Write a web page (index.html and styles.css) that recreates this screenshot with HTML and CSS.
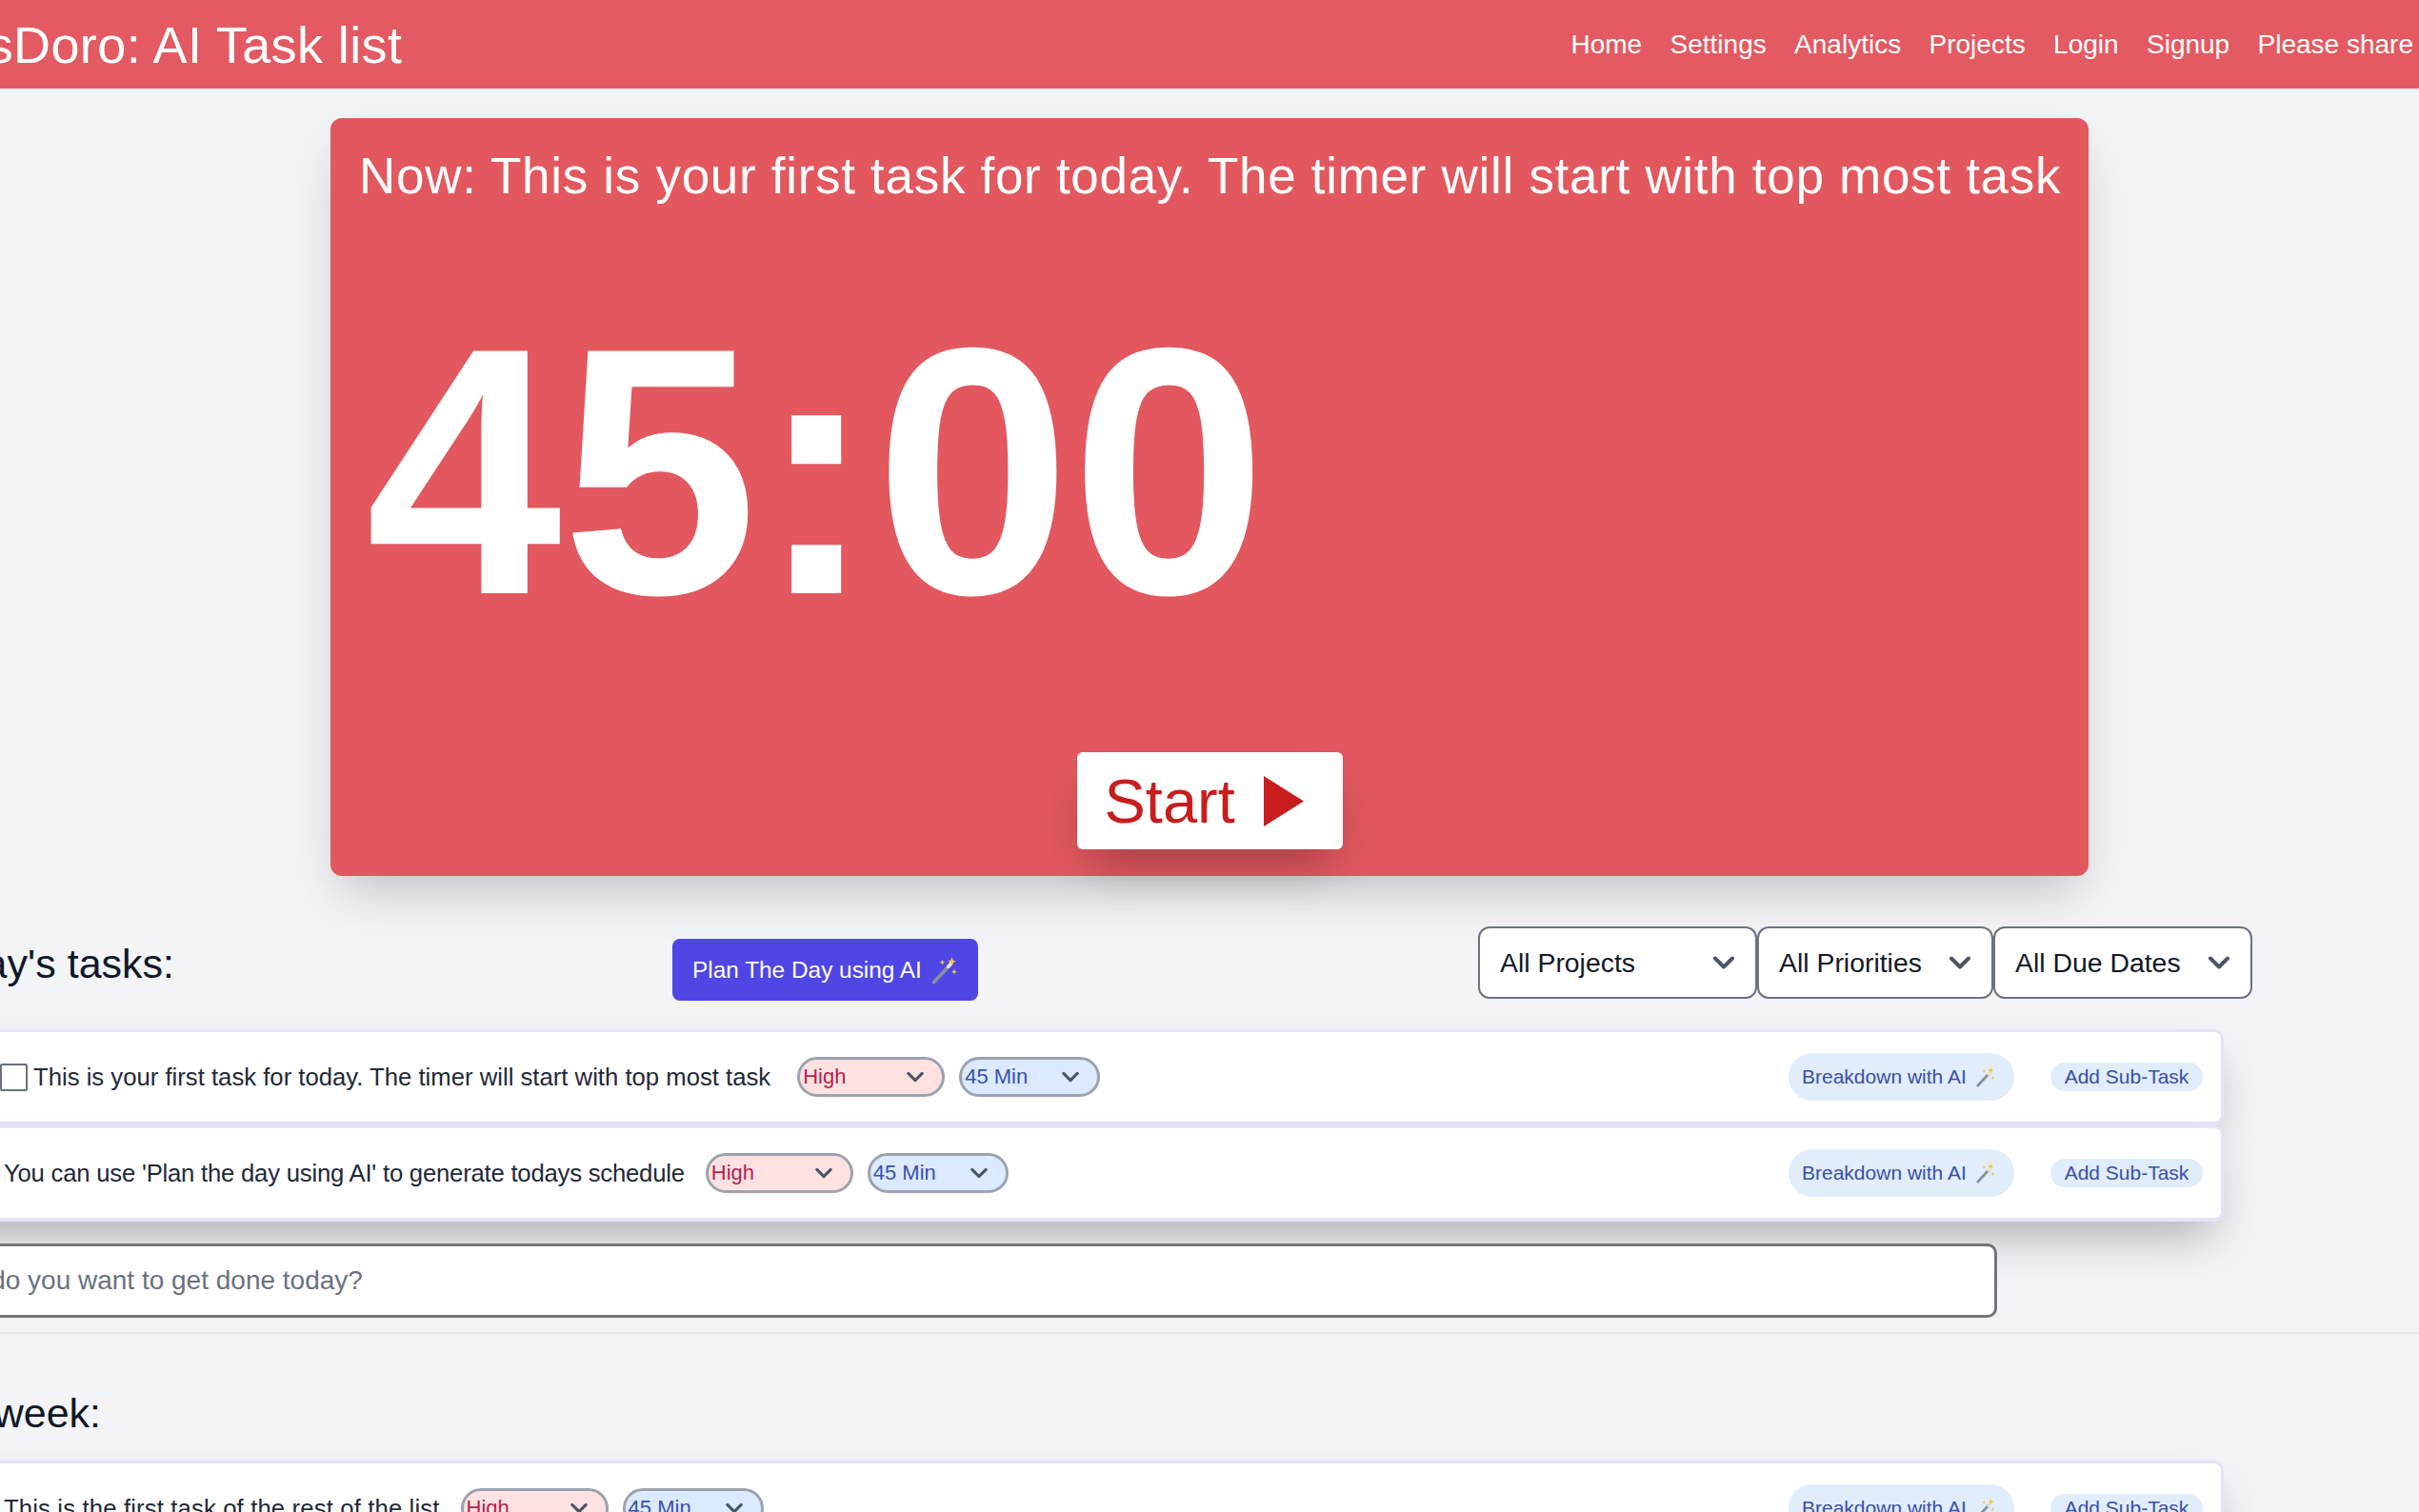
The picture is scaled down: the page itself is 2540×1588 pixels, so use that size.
FILE: index.html
```html
<!DOCTYPE html>
<html lang="en">
<head>
    <meta charset="UTF-8">
    <title>TasksDoro: AI Task list</title>
    <link rel="stylesheet" href="styles.css">
</head>
<body>
    <svg class="defs" width="0" height="0">
        <symbol id="chev" viewBox="0 0 20 20">
            <path d="M4 7l6 6 6-6" fill="none" stroke="currentColor" stroke-width="2.6" stroke-linecap="round" stroke-linejoin="round"/>
        </symbol>
        <symbol id="wand" viewBox="0 0 24 24">
            <path d="M3 22L15 9" stroke="#8a8f9c" stroke-width="3" stroke-linecap="round"/>
            <path d="M15 9l2.500-2.800" stroke="#e8e4d0" stroke-width="3" stroke-linecap="round"/>
            <path d="M18 1l1 2.500 2.500 1-2.500 1-1 2.500-1-2.500-2.500-1 2.500-1z" fill="#f2c83a"/>
            <path d="M10 3l.7 1.600 1.600.7-1.600.7-.7 1.600-.7-1.600-1.600-.7 1.600-.7z" fill="#f2c83a"/>
            <path d="M20 11l.7 1.600 1.600.7-1.600.7-.7 1.600-.7-1.600-1.600-.7 1.600-.7z" fill="#f2c83a"/>
        </symbol>
    </svg>

    <div class="navbar">
        <div class="brand">TasksDoro: AI Task list</div>
        <div class="navlinks">
            <a>Home</a>
            <a>Settings</a>
            <a>Analytics</a>
            <a>Projects</a>
            <a>Login</a>
            <a>Signup</a>
            <a>Please share</a>
        </div>
    </div>

    <div class="timercard">
        <div class="nowtask">Now: This is your first task for today. The timer will start with top most task</div>
        <div class="timer">45:00</div>
        <button class="startbtn">Start <svg class="play" viewBox="0 0 42 53"><path d="M0 0L42 26.500 0 53z"/></svg></button>
    </div>

    <div class="tasks">
        <div class="toolbar">
            <h2 class="heading">Today's tasks:</h2>
            <button class="planbtn">Plan The Day using AI <svg class="wandbig"><use href="#wand"/></svg></button>
            <div class="filters">
                <div class="filter f1">All Projects <svg class="chev"><use href="#chev"/></svg></div>
                <div class="filter f2">All Priorities <svg class="chev"><use href="#chev"/></svg></div>
                <div class="filter f3">All Due Dates <svg class="chev"><use href="#chev"/></svg></div>
            </div>
        </div>

        <div class="task first">
            <input type="checkbox" class="check">
            <span class="tasktext">This is your first task for today. The timer will start with top most task</span>
            <div class="pill high">High <svg class="chev"><use href="#chev"/></svg></div>
            <div class="pill mins">45 Min <svg class="chev"><use href="#chev"/></svg></div>
            <button class="aibtn">Breakdown with AI <svg class="wandsmall"><use href="#wand"/></svg></button>
            <button class="subbtn">Add Sub-Task</button>
        </div>
        <div class="task">
            <input type="checkbox" class="check">
            <span class="tasktext tight">You can use 'Plan the day using AI' to generate todays schedule</span>
            <div class="pill high">High <svg class="chev"><use href="#chev"/></svg></div>
            <div class="pill mins">45 Min <svg class="chev"><use href="#chev"/></svg></div>
            <button class="aibtn">Breakdown with AI <svg class="wandsmall"><use href="#wand"/></svg></button>
            <button class="subbtn">Add Sub-Task</button>
        </div>

        <input type="text" class="newtask" placeholder="What do you want to get done today?">
    </div>

    <hr class="divider">

    <div class="tasks">
        <h2 class="heading weekhead">This week:</h2>
        <div class="task">
            <input type="checkbox" class="check">
            <span class="tasktext loose">This is the first task of the rest of the list</span>
            <div class="pill high">High <svg class="chev"><use href="#chev"/></svg></div>
            <div class="pill mins">45 Min <svg class="chev"><use href="#chev"/></svg></div>
            <button class="aibtn">Breakdown with AI <svg class="wandsmall"><use href="#wand"/></svg></button>
            <button class="subbtn">Add Sub-Task</button>
        </div>
    </div>
</body>
</html>
```

FILE: styles.css
```css
*{
    box-sizing: border-box;
    font-family: "Liberation Sans", Arial, sans-serif;
}
html, body{
    height: 1588px;
    overflow: hidden;
}
body{
    margin: 0;
    background-color: #f3f4f6;
    color: #1f2937;
}
.defs{
    display: block;
    height: 0;
}
button{
    border: 0;
    cursor: pointer;
    white-space: nowrap;
}

/* top bar */
.navbar{
    display: flex;
    justify-content: space-between;
    align-items: center;
    height: 93px;
    background-color: #e45a62;
    color: #fff;
    padding-right: 6px;
}
.brand{
    font-size: 54px;
    letter-spacing: .4px;
    margin-left: -126px;
    white-space: nowrap;
}
.navlinks{
    display: flex;
    gap: 29.400px;
    font-size: 28px;
}

/* timer */
.timercard{
    display: flex;
    flex-direction: column;
    width: 1846px;
    height: 796px;
    margin: 31px auto 0;
    padding: 24px 30px 28px;
    background-color: #e2585e;
    border-radius: 12px;
    color: #fff;
    box-shadow: 0 25px 50px -12px rgba(0,0,0,.22);
}
.nowtask{
    font-size: 53px;
    letter-spacing: .7px;
    line-height: 74px;
    white-space: nowrap;
}
.timer{
    height: 400px;
    margin-top: 73px;
    margin-left: 7px;
    font-size: 370px;
    line-height: 400px;
    font-weight: 700;
}
.startbtn{
    display: flex;
    align-items: center;
    gap: 30px;
    align-self: center;
    height: 102px;
    width: 279px;
    margin-top: auto;
    padding-left: 29px;
    background-color: #fff;
    border-radius: 6px;
    color: #c81e1e;
    font-size: 65px;
    box-shadow: 0 25px 50px -12px rgba(0,0,0,.3);
}
.play{
    width: 42px;
    height: 53px;
    fill: #c81e1e;
}

/* task lists */
.tasks{
    margin-left: -120px;
}
.toolbar{
    display: flex;
    align-items: flex-start;
    margin-top: 53px;
    margin-bottom: 30px;
}
.heading{
    width: 303px;
    margin: 0;
    padding-top: 1px;
    font-size: 43px;
    font-weight: 400;
    line-height: 76px;
    text-align: right;
    white-space: nowrap;
    color: #111827;
}
.planbtn{
    display: flex;
    align-items: center;
    gap: 9px;
    width: 321px;
    height: 65px;
    margin-top: 13px;
    margin-left: 523px;
    padding-left: 21px;
    background-color: #4f46e5;
    border-radius: 8px;
    color: #fff;
    font-size: 24.400px;
}
.wandbig{
    width: 30px;
    height: 30px;
}
.filters{
    display: flex;
    margin-left: 525px;
}
.filter{
    display: flex;
    justify-content: space-between;
    align-items: center;
    height: 76px;
    padding: 0 18px 0 21px;
    background-color: #fff;
    border: 2px solid #6b7280;
    border-radius: 12px;
    font-size: 28.400px;
    color: #111827;
}
.f1{ width: 293px; }
.f2{ width: 248px; }
.f3{ width: 272px; }
.filter .chev{
    width: 30px;
    height: 30px;
    color: #4b5563;
}

.task{
    display: flex;
    align-items: center;
    width: 2455px;
    height: 101px;
    padding-left: 86px;
    padding-right: 19px;
    background-color: #fff;
    border: solid #e4e4f8;
    border-width: 3px 3px 4px 3px;
    border-radius: 10px;
    box-shadow: 0 25px 50px -12px rgba(0,0,0,.3);
}
.first{
    padding-left: 117px;
}
.check{
    appearance: none;
    flex: none;
    width: 29px;
    height: 29px;
    margin: 0 6px 0 0;
    background-color: #fff;
    border: 2px solid #6b7280;
    border-radius: 2px;
}
.tasktext{
    font-size: 25.700px;
    color: #1f2937;
    white-space: nowrap;
    margin-right: 22px;
}
.first .tasktext{
    margin-right: 28px;
}
.tight{
    letter-spacing: -.22px;
}
.loose{
    letter-spacing: .14px;
}
.pill{
    display: flex;
    justify-content: space-between;
    align-items: center;
    width: 155px;
    height: 42px;
    padding: 0 16px 0 3px;
    border: 3px solid #9ca3af;
    border-radius: 21px;
    font-size: 22px;
}
.pill .chev{
    width: 24px;
    height: 24px;
    color: #4b5563;
}
.high{
    background-color: #fee2e2;
    color: #b91c4c;
    margin-right: 15px;
}
.mins{
    background-color: #dbeafe;
    color: #3b4fb0;
    width: 148px;
}
.aibtn{
    display: flex;
    align-items: center;
    gap: 9px;
    width: 237px;
    height: 50px;
    margin-left: auto;
    padding-left: 14px;
    background-color: #e1edfb;
    border-radius: 25px;
    color: #3b4fa8;
    font-size: 21px;
}
.wandsmall{
    width: 22px;
    height: 22px;
}
.subbtn{
    width: 160px;
    height: 30px;
    margin-left: 38px;
    padding: 0;
    background-color: #e1edfb;
    border-radius: 15px;
    color: #3b4fa8;
    font-size: 21px;
}

.newtask{
    display: block;
    width: 2217px;
    height: 78px;
    margin-top: 23px;
    padding: 0 20px 0 34px;
    background-color: #fff;
    border: 3px solid #72747c;
    border-radius: 10px;
    font-size: 28px;
}
.newtask::placeholder{
    color: #6b7280;
}
.divider{
    height: 2px;
    margin: 15px 0 0;
    border: 0;
    background-color: #e7e8ec;
}
.weekhead{
    width: 226px;
    margin-top: 44px;
    margin-bottom: 12px;
}
```
